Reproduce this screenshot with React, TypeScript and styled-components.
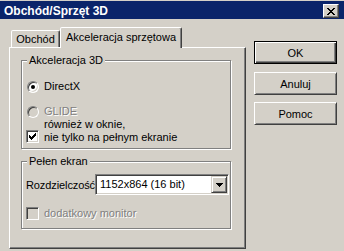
import React from 'react';
import styled, { createGlobalStyle, css } from 'styled-components';

const face = '#d4d0c8';
const shadow = '#808080';
const dark = '#404040';

const GlobalStyle = createGlobalStyle`
  html, body {
    margin: 0;
    padding: 0;
    background: ${face};
  }

  body {
    font-family: 'Liberation Sans', Arial, sans-serif;
    font-size: 11px;
    color: #000;
  }
`;

const Window = styled.div`
  box-sizing: border-box;
  width: 344px;
  height: 251px;
  padding-top: 1px;
  overflow: hidden;
  background: ${face};
  display: flex;
  flex-direction: column;
`;

const TitleBar = styled.div`
  flex-shrink: 0;
  height: 18px;
  display: flex;
  align-items: flex-start;
  background: #0a246a;
`;

const Title = styled.div`
  flex: 1;
  padding: 1px 0 0 4px;
  color: #fff;
  font-size: 12px;
  font-weight: bold;
  line-height: 18px;
  white-space: nowrap;
`;

const CloseButton = styled.div`
  box-sizing: border-box;
  width: 16px;
  height: 14px;
  margin: 3px 5px 0 0;
  display: flex;
  align-items: center;
  justify-content: center;
  background: ${face};
  border: 1px solid;
  border-color: #fff ${dark} ${dark} #fff;
  box-shadow: inset -1px -1px ${shadow};
`;

const Body = styled.div`
  display: flex;
  gap: 8px;
  padding: 8px 0 0 9px;
`;

const TabArea = styled.div`
  width: 237px;
  display: flex;
  flex-direction: column;
`;

const TabStrip = styled.div`
  height: 20px;
  display: flex;
  align-items: flex-end;
  padding-left: 2px;
`;

const Tab = styled.div<{ $active?: boolean; $width: number }>`
  position: relative;
  box-sizing: border-box;
  width: ${p => p.$width}px;
  height: ${p => (p.$active ? 21 : 17)}px;
  margin-bottom: ${p => (p.$active ? -1 : 0)}px;
  padding-top: ${p => (p.$active ? 3 : 2)}px;
  z-index: ${p => (p.$active ? 1 : 0)};
  text-align: center;
  line-height: 13px;
  white-space: nowrap;
  background: ${face};
  border: 1px solid;
  border-bottom: none;
  border-color: #fff ${dark} transparent #fff;
  border-radius: 2px 2px 0 0;
  box-shadow: inset -1px 0 ${shadow};
`;

const Panel = styled.div`
  box-sizing: border-box;
  width: 237px;
  height: 202px;
  padding: 12px 0 0 11px;
  border: 1px solid;
  border-color: #fff ${dark} ${dark} #fff;
  box-shadow: inset -1px -1px ${shadow};
`;

const GroupBox = styled.div<{ $height: number }>`
  box-sizing: border-box;
  width: 210px;
  height: ${p => p.$height}px;
  display: flex;
  flex-direction: column;
  align-items: flex-start;
  border: 1px solid ${shadow};
  box-shadow: 1px 1px 0 #fff, inset 1px 1px 0 #fff;

  & + & {
    margin-top: 12px;
  }
`;

const Legend = styled.div`
  margin: -7px 0 0 5px;
  padding: 0 2px;
  line-height: 13px;
  background: ${face};
  white-space: nowrap;
`;

const OptionRow = styled.div<{ $top: number; $indent: number }>`
  display: flex;
  align-items: flex-start;
  gap: 5px;
  margin-top: ${p => p.$top}px;
  padding-left: ${p => p.$indent}px;
  line-height: 13px;
`;

const Caption = styled.span<{ $disabled?: boolean }>`
  white-space: nowrap;
  ${p =>
    p.$disabled &&
    css`
      color: ${shadow};
      text-shadow: 1px 1px 0 #fff;
    `}
`;

const Radio = styled.span<{ $checked?: boolean; $disabled?: boolean }>`
  box-sizing: border-box;
  flex-shrink: 0;
  width: 12px;
  height: 12px;
  margin-top: 1px;
  display: flex;
  align-items: center;
  justify-content: center;
  border-radius: 50%;
  border: 1px solid;
  border-color: ${shadow} #fff #fff ${shadow};
  box-shadow: inset 1px 1px ${dark}, inset -1px -1px ${face};
  background: ${p => (p.$disabled ? face : '#fff')};

  &::after {
    content: '';
    display: ${p => (p.$checked ? 'block' : 'none')};
    width: 4px;
    height: 4px;
    border-radius: 50%;
    background: #000;
  }
`;

const CheckBox = styled.span<{ $top?: number; $disabled?: boolean }>`
  box-sizing: border-box;
  flex-shrink: 0;
  width: 13px;
  height: 13px;
  margin-top: ${p => p.$top || 0}px;
  display: flex;
  align-items: center;
  justify-content: center;
  border: 1px solid;
  border-color: ${shadow} #fff #fff ${shadow};
  box-shadow: inset 1px 1px ${dark}, inset -1px -1px ${face};
  background: ${p => (p.$disabled ? face : '#fff')};
`;

const FieldRow = styled.div`
  display: flex;
  align-items: center;
  margin-top: 6px;
  padding-left: 4px;
`;

const FieldLabel = styled.span`
  width: 69px;
  letter-spacing: -0.1px;
  white-space: nowrap;
`;

const Select = styled.div`
  box-sizing: border-box;
  width: 134px;
  height: 21px;
  padding: 1px;
  display: flex;
  background: #fff;
  border: 1px solid;
  border-color: ${shadow} #fff #fff ${shadow};
  box-shadow: inset 1px 1px ${dark}, inset -1px -1px ${face};
`;

const SelectValue = styled.span`
  flex: 1;
  padding-left: 3px;
  line-height: 17px;
  white-space: nowrap;
`;

const DropButton = styled.span`
  box-sizing: border-box;
  width: 16px;
  height: 17px;
  display: flex;
  align-items: center;
  justify-content: center;
  background: ${face};
  border: 1px solid;
  border-color: ${face} ${dark} ${dark} ${face};
  box-shadow: inset 1px 1px #fff, inset -1px -1px ${shadow};
`;

const ButtonColumn = styled.div`
  display: flex;
  flex-direction: column;
  gap: 7px;
  margin-top: 14px;
`;

const Button = styled.button<{ $default?: boolean }>`
  box-sizing: border-box;
  width: 83px;
  height: 23px;
  margin: 0 0 ${p => (p.$default ? 1 : 0)}px;
  padding: 0;
  font: inherit;
  color: #000;
  background: ${face};
  border: 1px solid;
  ${p =>
    p.$default
      ? css`
          border-color: #000;
          box-shadow: inset 1px 1px #fff, inset -1px -1px ${dark}, inset -2px -2px ${shadow};
        `
      : css`
          border-color: #fff ${dark} ${dark} #fff;
          box-shadow: inset 1px 1px ${face}, inset -1px -1px ${shadow};
        `}
`;

const CloseGlyph = () => (
  <svg width="8" height="7" viewBox="0 0 8 7" shapeRendering="crispEdges">
    <path
      fill="#000"
      d="M0 0h2v1H0z M6 0h2v1H6z M1 1h2v1H1z M5 1h2v1H5z M2 2h4v1H2z M3 3h2v1H3z M2 4h4v1H2z M1 5h2v1H1z M5 5h2v1H5z M0 6h2v1H0z M6 6h2v1H6z"
    />
  </svg>
);

const CheckGlyph = () => (
  <svg width="7" height="7" viewBox="0 0 7 7" shapeRendering="crispEdges">
    <path
      fill="#000"
      d="M0 2h1v3H0z M1 3h1v3H1z M2 4h1v3H2z M3 3h1v3H3z M4 2h1v3H4z M5 1h1v3H5z M6 0h1v3H6z"
    />
  </svg>
);

const ArrowGlyph = () => (
  <svg width="7" height="4" viewBox="0 0 7 4" shapeRendering="crispEdges">
    <path fill="#000" d="M0 0h7v1H0z M1 1h5v1H1z M2 2h3v1H2z M3 3h1v1H3z" />
  </svg>
);

export default function App() {
  return (
    <>
      <GlobalStyle />
      <Window>
        <TitleBar>
          <Title>Obchód/Sprzęt 3D</Title>
          <CloseButton>
            <CloseGlyph />
          </CloseButton>
        </TitleBar>
        <Body>
          <TabArea>
            <TabStrip>
              <Tab $width={49}>Obchód</Tab>
              <Tab $active $width={122}>
                Akceleracja sprzętowa
              </Tab>
            </TabStrip>
            <Panel>
              <GroupBox $height={89}>
                <Legend>Akceleracja 3D</Legend>
                <OptionRow $top={13} $indent={5}>
                  <Radio $checked />
                  <Caption>DirectX</Caption>
                </OptionRow>
                <OptionRow $top={12} $indent={5}>
                  <Radio $disabled />
                  <Caption $disabled>GLIDE</Caption>
                </OptionRow>
                <OptionRow $top={0} $indent={4}>
                  <CheckBox $top={12}>
                    <CheckGlyph />
                  </CheckBox>
                  <Caption>
                    również w oknie,
                    <br />
                    nie tylko na pełnym ekranie
                  </Caption>
                </OptionRow>
              </GroupBox>
              <GroupBox $height={68}>
                <Legend>Pełen ekran</Legend>
                <FieldRow>
                  <FieldLabel>Rozdzielczość</FieldLabel>
                  <Select>
                    <SelectValue>1152x864 (16 bit)</SelectValue>
                    <DropButton>
                      <ArrowGlyph />
                    </DropButton>
                  </Select>
                </FieldRow>
                <OptionRow $top={12} $indent={4}>
                  <CheckBox $disabled />
                  <Caption $disabled>dodatkowy monitor</Caption>
                </OptionRow>
              </GroupBox>
            </Panel>
          </TabArea>
          <ButtonColumn>
            <Button $default>OK</Button>
            <Button>Anuluj</Button>
            <Button>Pomoc</Button>
          </ButtonColumn>
        </Body>
      </Window>
    </>
  );
}
